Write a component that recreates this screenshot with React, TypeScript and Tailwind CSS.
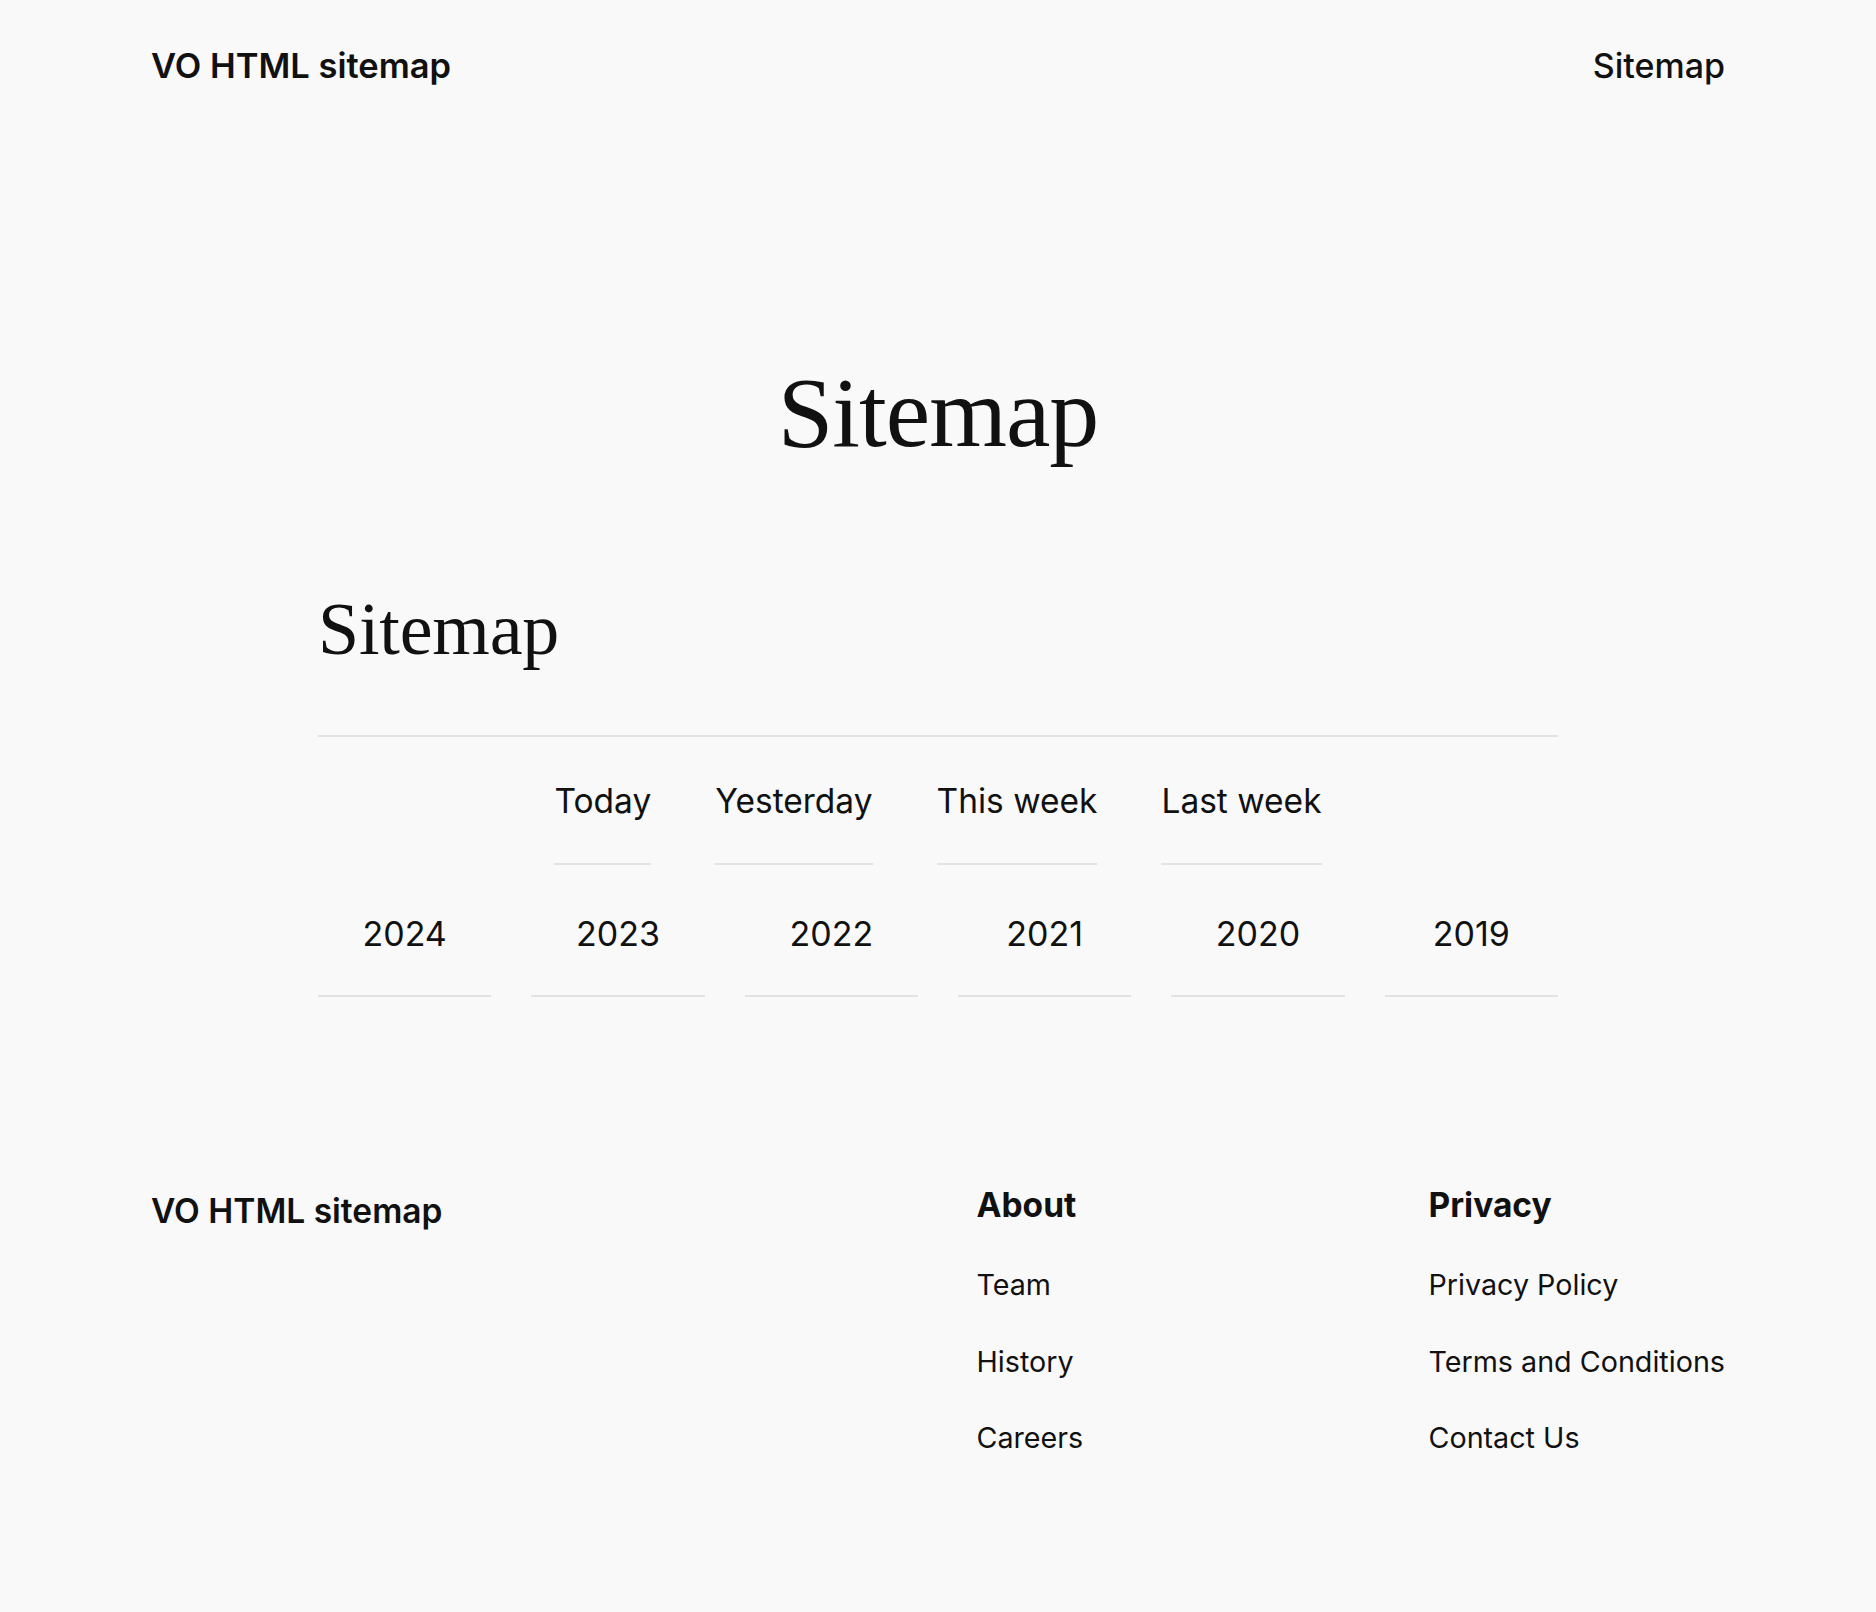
const sans = { fontFamily: 'Inter, "Liberation Sans", sans-serif' };

const periods = ['Today', 'Yesterday', 'This week', 'Last week'];
const years = ['2024', '2023', '2022', '2021', '2020', '2019'];

const footerColumns = [
    { title: 'About', links: ['Team', 'History', 'Careers'] },
    { title: 'Privacy', links: ['Privacy Policy', 'Terms and Conditions', 'Contact Us'] },
];

export default function App() {
    return (
        <div className="min-h-screen bg-[#f9f9f9] text-[#111111]" style={sans}>
            <header className="flex items-start justify-between px-[151px] pt-[45px]">
                <a href="#" className="text-[34.5px] leading-[1.21] font-semibold">
                    VO HTML sitemap
                </a>
                <a href="#" className="text-[34px] leading-[1.21] font-medium">
                    Sitemap
                </a>
            </header>

            <main>
                <h1 className="mt-[276px] text-center font-['Liberation_Serif',serif] text-[100px] leading-none tracking-[-1px]">
                    Sitemap
                </h1>

                <section className="mx-auto mt-[129px] w-[1240px]">
                    <h2 className="border-b-2 border-[#e3e3e3] pb-[69px] font-['Liberation_Serif',serif] text-[74px] leading-none tracking-[-0.2px]">
                        Sitemap
                    </h2>

                    <nav className="flex justify-center gap-16 pt-[44px]">
                        {periods.map((period) => (
                            <a key={period} href="#" className="border-b-2 border-[#e3e3e3] pb-[42px] text-[33.5px] leading-[1.21]">
                                {period}
                            </a>
                        ))}
                    </nav>

                    <div className="mt-[48px] grid grid-cols-6 gap-10">
                        {years.map((year) => (
                            <a key={year} href="#" className="border-b-2 border-[#e3e3e3] pb-[41px] text-center text-[34px] leading-[1.21]">
                                {year}
                            </a>
                        ))}
                    </div>
                </section>
            </main>

            <footer className="mt-[193px] flex items-start justify-between px-[151px] pb-[120px]">
                <a href="#" className="mt-[1px] text-[33.5px] leading-[1.21] font-semibold">
                    VO HTML sitemap
                </a>
                <div className="flex">
                    {footerColumns.map((column, i) => (
                        <div key={column.title} className={'flex flex-col gap-[42px] ' + (i === 0 ? 'w-[452px]' : '')}>
                            <h3 className="-mt-[5px] text-[33.5px] leading-[1.21] font-bold">{column.title}</h3>
                            <ul className="flex flex-col gap-[42px]">
                                {column.links.map((link) => (
                                    <li key={link}>
                                        <a href="#" className="text-[28.7px] leading-[1.21]">
                                            {link}
                                        </a>
                                    </li>
                                ))}
                            </ul>
                        </div>
                    ))}
                </div>
            </footer>
        </div>
    );
}
